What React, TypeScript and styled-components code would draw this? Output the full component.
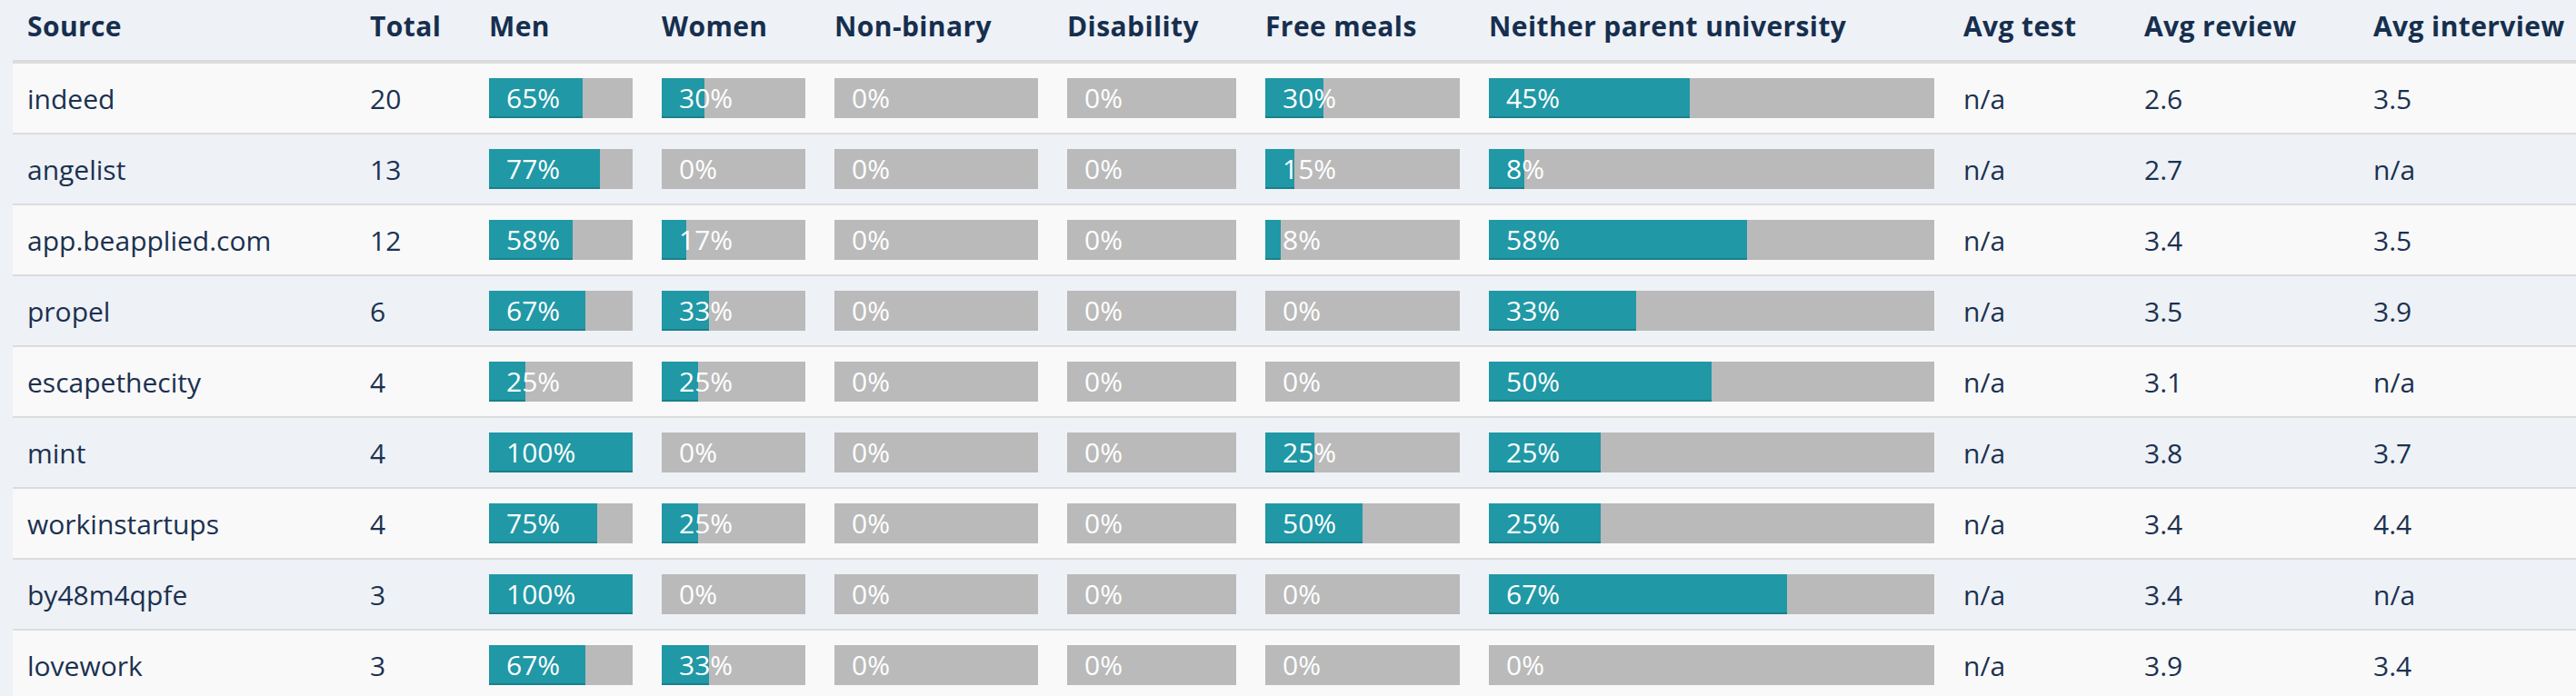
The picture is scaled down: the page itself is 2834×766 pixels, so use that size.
import React from "react";
import styled, { createGlobalStyle } from "styled-components";

const GlobalStyle = createGlobalStyle`
  html, body {
    margin: 0;
    padding: 0;
    background: #eef1f6;
  }
  body {
    font-family: "Open Sans", "Liberation Sans", sans-serif;
    color: #1b3150;
  }
`;

const Page = styled.div`
  width: 2834px;
  box-sizing: border-box;
  padding-left: 14px;
  overflow: hidden;
`;

const Table = styled.table`
  width: 2820px;
  table-layout: fixed;
  border-collapse: separate;
  border-spacing: 0;
`;

const Col = styled.col<{ $w: number }>`
  width: ${(p) => p.$w}px;
`;

const HeadCell = styled.th`
  text-align: left;
  font-weight: 700;
  font-size: 30px;
  line-height: 41px;
  letter-spacing: 0.4px;
  padding: 8px 16px 17px;
  border-bottom: 4px solid #dcdcdc;
  white-space: nowrap;
  color: #162f4e;
`;

const Row = styled.tr<{ $alt: boolean }>`
  background: ${(p) => (p.$alt ? "#eef1f6" : "#f9f9f9")};
`;

const Cell = styled.td`
  padding: 16px;
  border-bottom: 2px solid #dcdcdc;
  font-size: 30px;
  line-height: 41px;
  vertical-align: middle;
  white-space: nowrap;
  color: #1b3150;
`;

const Track = styled.div`
  position: relative;
  height: 44px;
  background: #bababa;
`;

const Fill = styled.div`
  position: absolute;
  left: 0;
  top: 0;
  bottom: 0;
  box-sizing: border-box;
  background: #2098a6;
  border-bottom: 2px solid #1a7f8b;
`;

const Label = styled.span`
  position: relative;
  display: block;
  padding-left: 19px;
  font-size: 30px;
  line-height: 44px;
  color: #ffffff;
`;

type Kind = "text" | "pct";

const columns: { label: string; width: number; kind: Kind }[] = [
  { label: "Source", width: 377, kind: "text" },
  { label: "Total", width: 131, kind: "text" },
  { label: "Men", width: 190, kind: "pct" },
  { label: "Women", width: 190, kind: "pct" },
  { label: "Non-binary", width: 256, kind: "pct" },
  { label: "Disability", width: 218, kind: "pct" },
  { label: "Free meals", width: 246, kind: "pct" },
  { label: "Neither parent university", width: 522, kind: "pct" },
  { label: "Avg test", width: 199, kind: "text" },
  { label: "Avg review", width: 252, kind: "text" },
  { label: "Avg interview", width: 239, kind: "text" },
];

const rows: (string | number)[][] = [
  ["indeed", 20, 65, 30, 0, 0, 30, 45, "n/a", "2.6", "3.5"],
  ["angelist", 13, 77, 0, 0, 0, 15, 8, "n/a", "2.7", "n/a"],
  ["app.beapplied.com", 12, 58, 17, 0, 0, 8, 58, "n/a", "3.4", "3.5"],
  ["propel", 6, 67, 33, 0, 0, 0, 33, "n/a", "3.5", "3.9"],
  ["escapethecity", 4, 25, 25, 0, 0, 0, 50, "n/a", "3.1", "n/a"],
  ["mint", 4, 100, 0, 0, 0, 25, 25, "n/a", "3.8", "3.7"],
  ["workinstartups", 4, 75, 25, 0, 0, 50, 25, "n/a", "3.4", "4.4"],
  ["by48m4qpfe", 3, 100, 0, 0, 0, 0, 67, "n/a", "3.4", "n/a"],
  ["lovework", 3, 67, 33, 0, 0, 0, 0, "n/a", "3.9", "3.4"],
];

function PercentBar({ value }: { value: number }) {
  return (
    <Track>
      {value > 0 && <Fill style={{ width: `${value}%` }} />}
      <Label>{value}%</Label>
    </Track>
  );
}

export default function App() {
  return (
    <Page>
      <GlobalStyle />
      <Table>
        <colgroup>
          {columns.map((c) => (
            <Col key={c.label} $w={c.width} />
          ))}
        </colgroup>
        <thead>
          <tr>
            {columns.map((c) => (
              <HeadCell key={c.label}>{c.label}</HeadCell>
            ))}
          </tr>
        </thead>
        <tbody>
          {rows.map((r, i) => (
            <Row key={String(r[0])} $alt={i % 2 === 1}>
              {r.map((v, j) => (
                <Cell key={j}>
                  {columns[j].kind === "pct" ? (
                    <PercentBar value={Number(v)} />
                  ) : (
                    v
                  )}
                </Cell>
              ))}
            </Row>
          ))}
        </tbody>
      </Table>
    </Page>
  );
}
